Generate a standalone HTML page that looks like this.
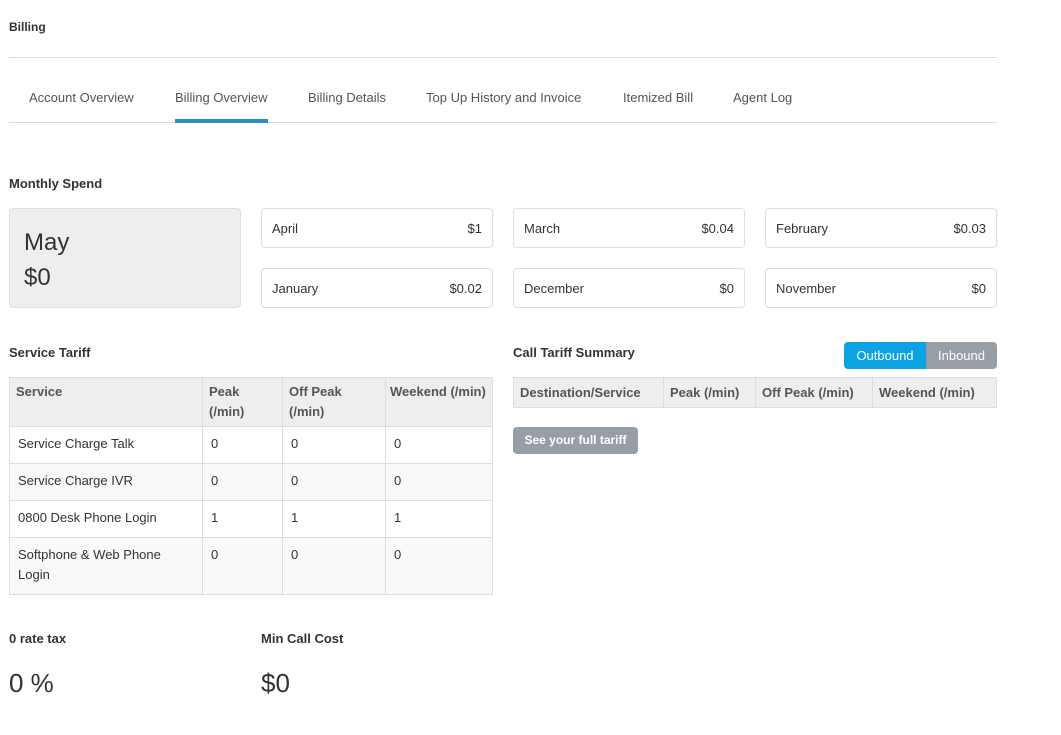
<!DOCTYPE html>
<html><head><meta charset="utf-8"><style>
*{box-sizing:border-box;margin:0;padding:0}
body{width:1061px;height:735px;background:#fff;font-family:"Liberation Sans",Arial,sans-serif;color:#333;position:relative;overflow:hidden}
.a{position:absolute}
.b{font-weight:bold}
.card{position:absolute;border:1px solid #ddd;border-radius:4px;height:40px;font-size:13px;display:flex;justify-content:space-between;align-items:center;padding:0 10px;background:#fff}
table{border-collapse:collapse;position:absolute;font-size:13px}
td,th{border:1px solid #ddd;vertical-align:top;text-align:left}
th{background:#eee;color:#555;font-weight:bold}
</style></head><body>
<div class="a b" style="left:9px;top:20px;font-size:12px">Billing</div>
<div class="a" style="left:9px;top:57px;width:988px;border-top:1px solid #ddd"></div>
<div class="a" style="left:9px;top:122px;width:988px;border-top:1px solid #ddd"></div>
<div class="a" style="top:90px;font-size:13px;color:#555;left:29px">Account Overview</div>
<div class="a" style="top:90px;font-size:13px;color:#555;left:175px">Billing Overview</div>
<div class="a" style="left:175px;top:119px;width:93px;height:4px;background:#2b8ccb"></div>
<div class="a" style="top:90px;font-size:13px;color:#555;left:308px">Billing Details</div>
<div class="a" style="top:90px;font-size:13px;color:#555;left:426px">Top Up History and Invoice</div>
<div class="a" style="top:90px;font-size:13px;color:#555;left:623px">Itemized Bill</div>
<div class="a" style="top:90px;font-size:13px;color:#555;left:733px">Agent Log</div>

<div class="a b" style="left:9px;top:176px;font-size:13px">Monthly Spend</div>
<div class="a" style="left:9px;top:208px;width:232px;height:100px;background:#eee;border:1px solid #ddd;border-radius:4px;padding:16px 0 0 14px;font-size:24px;line-height:35px">May<br>$0</div>
<div class="card" style="left:261px;top:208px;width:232px"><span>April</span><span>$1</span></div>
<div class="card" style="left:513px;top:208px;width:232px"><span>March</span><span>$0.04</span></div>
<div class="card" style="left:765px;top:208px;width:232px"><span>February</span><span>$0.03</span></div>
<div class="card" style="left:261px;top:268px;width:232px"><span>January</span><span>$0.02</span></div>
<div class="card" style="left:513px;top:268px;width:232px"><span>December</span><span>$0</span></div>
<div class="card" style="left:765px;top:268px;width:232px"><span>November</span><span>$0</span></div>

<div class="a b" style="left:9px;top:345px;font-size:13px">Service Tariff</div>
<table style="left:9px;top:377px;width:484px;line-height:20px">
<tr style="height:49px"><th style="width:193px;padding:4px 6px 3px">Service</th><th style="width:80px;padding:4px 6px 3px">Peak (/min)</th><th style="width:103px;padding:4px 6px 3px">Off Peak (/min)</th><th style="padding:4px 4px 3px">Weekend (/min)</th></tr>
<tr style="height:37px"><td style="padding:7px 8px">Service Charge Talk</td><td style="padding:7px 8px">0</td><td style="padding:7px 8px">0</td><td style="padding:7px 8px">0</td></tr>
<tr style="height:37px;background:#f9f9f9"><td style="padding:7px 8px">Service Charge IVR</td><td style="padding:7px 8px">0</td><td style="padding:7px 8px">0</td><td style="padding:7px 8px">0</td></tr>
<tr style="height:37px"><td style="padding:7px 8px">0800 Desk Phone Login</td><td style="padding:7px 8px">1</td><td style="padding:7px 8px">1</td><td style="padding:7px 8px">1</td></tr>
<tr style="height:57px;background:#f9f9f9"><td style="padding:7px 8px">Softphone &amp; Web Phone Login</td><td style="padding:7px 8px">0</td><td style="padding:7px 8px">0</td><td style="padding:7px 8px">0</td></tr>
</table>

<div class="a b" style="left:513px;top:345px;font-size:13px">Call Tariff Summary</div>
<div class="a" style="left:844px;top:342px;width:82px;height:27px;background:#0ca3e3;color:#fff;border-radius:4px 0 0 4px;font-size:13px;text-align:center;line-height:27px">Outbound</div>
<div class="a" style="left:926px;top:342px;width:71px;height:27px;background:#979ea5;color:#fff;border-radius:0 4px 4px 0;font-size:13px;text-align:center;line-height:27px">Inbound</div>
<table style="left:513px;top:377px;width:484px;height:30px">
<tr><th style="width:150px;padding:7px 6px">Destination/Service</th><th style="width:92px;padding:7px 6px">Peak (/min)</th><th style="width:117px;padding:7px 6px">Off Peak (/min)</th><th style="padding:7px 6px">Weekend (/min)</th></tr>
</table>
<div class="a b" style="left:513px;top:427px;width:125px;height:27px;background:#979ea5;color:#fff;border-radius:4px;font-size:12px;text-align:center;line-height:27px">See your full tariff</div>

<div class="a b" style="left:9px;top:631px;font-size:13px">0 rate tax</div>
<div class="a" style="left:9px;top:668px;font-size:26px">0 %</div>
<div class="a b" style="left:261px;top:631px;font-size:13px">Min Call Cost</div>
<div class="a" style="left:261px;top:668px;font-size:26px">$0</div>
</body></html>
